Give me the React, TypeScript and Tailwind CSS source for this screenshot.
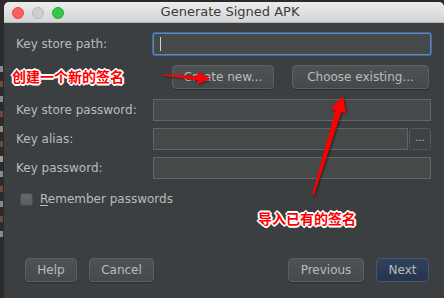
const labelFont = { fontFamily: '"DejaVu Sans", sans-serif' };

const Field = ({ label, children }: { label: string; children: React.ReactNode }) => (
  <div className="flex items-center h-[22px]">
    <div className="w-[137px] text-[12px] text-[#bbbbbb]">{label}</div>
    {children}
  </div>
);

const Btn = ({ children, className = "" }: { children: React.ReactNode; className?: string }) => (
  <button
    className={
      "h-[24px] rounded-[4px] border border-[#5e6060] bg-gradient-to-b from-[#4f5355] to-[#46494b] text-[12px] text-[#bbbbbb] shadow-[0_1px_1px_rgba(0,0,0,0.25)] " +
      className
    }
  >
    {children}
  </button>
);

const Note = ({ text, className }: { text: string; className: string }) => (
  <div
    className={"absolute text-[14px] font-bold leading-none text-[#ff0000] " + className}
    style={{
      fontFamily: '"Noto Sans CJK SC", sans-serif',
      textShadow:
        "1px 0 0 #fff, -1px 0 0 #fff, 0 1px 0 #fff, 0 -1px 0 #fff, 1px 1px 0 #fff, -1px -1px 0 #fff, 1px -1px 0 #fff, -1px 1px 0 #fff, 2px 0 0 #fff, -2px 0 0 #fff, 0 2px 0 #fff, 0 -2px 0 #fff",
    }}
  >
    {text}
  </div>
);

// clipped code fragments of the editor peeking out on the left
const bits = ["#8a8a8a", "#6b4a3a", "#8a8a8a", "#6b4a3a", "#8a8a8a", "#6b4a3a", "#9a9a9a", "#8a8a8a", "#6b4a3a", "#8a8a8a", "#6b4a3a", "#8a8a8a"];

export default function App() {
  return (
    <div className="relative w-[444px] h-[298px] overflow-hidden bg-[#2b2b2b]" style={labelFont}>
      <div className="flex h-full">
        {/* editor behind the dialog */}
        <div className="w-[4px] pt-[66px] flex flex-col gap-[9px]">
          {bits.map((c, i) => (
            <div key={i} className="w-[3px] h-[6px]" style={{ backgroundColor: c }} />
          ))}
        </div>

        {/* dialog window */}
        <div className="flex-1 mt-[2px] flex flex-col rounded-t-[5px] overflow-hidden bg-[#3c3f41]">
          <div className="relative h-[21px] flex items-center justify-center bg-gradient-to-b from-[#ececec] to-[#d5d5d5] border-b border-[#b5b5b5]">
            <div className="absolute left-[8px] top-[5px] flex gap-[8px]">
              <span className="w-[12px] h-[12px] rounded-full bg-[#fc605c] border border-[#de4a45]" />
              <span className="w-[12px] h-[12px] rounded-full bg-[#cfcfcf] border border-[#b8b8b8]" />
              <span className="w-[12px] h-[12px] rounded-full bg-[#34c84a] border border-[#2aa73b]" />
            </div>
            <span className="text-[13px] text-[#3a3a3a] ml-[12px]">Generate Signed APK</span>
          </div>

          <div className="flex-1 flex flex-col pl-[12px] pr-[13px] pt-[10px] pb-[16px]">
            <Field label="Key store path:">
              <div className="flex-1 h-[22px] rounded-[2px] border border-[#5789c5] bg-[#45494a] shadow-[0_0_0_1px_rgba(74,136,199,0.6)] flex items-center pl-[6px]">
                <span className="w-px h-[14px] bg-[#cfcfcf]" />
              </div>
            </Field>

            <div className="flex mt-[10px] pl-[156px]">
              <Btn className="w-[102px]">Create new...</Btn>
              <Btn className="w-[137px] ml-[18px]">Choose existing...</Btn>
            </div>

            <div className="mt-[10px] flex flex-col gap-[7px]">
              <Field label="Key store password:">
                <div className="flex-1 h-[22px] border border-[#646464] bg-[#45494a]" />
              </Field>
              <Field label="Key alias:">
                <div className="flex-1 h-[22px] border border-[#646464] bg-[#45494a]" />
                <div className="ml-[1px] w-[22px] h-[22px] rounded-[3px] border border-[#555858] bg-[#3f4244] flex items-center justify-center text-[10px] text-[#bbbbbb] leading-none pb-[3px]">
                  ...
                </div>
              </Field>
              <Field label="Key password:">
                <div className="flex-1 h-[22px] border border-[#646464] bg-[#45494a]" />
              </Field>
            </div>

            <label className="mt-[11px] flex items-center gap-[7px] pl-[4px] text-[12px] text-[#bbbbbb]">
              <span className="w-[13px] h-[13px] rounded-[3px] border border-[#4a4c4e] bg-gradient-to-b from-[#666a6c] to-[#595c5e]" />
              <span>
                <span className="underline underline-offset-2">R</span>emember passwords
              </span>
            </label>

            <div className="mt-auto flex items-center pl-[9px] pr-[2px]">
              <Btn className="w-[52px]">Help</Btn>
              <Btn className="w-[65px] ml-[12px]">Cancel</Btn>
              <div className="flex-1" />
              <Btn className="w-[76px] text-[#8c8c8c]">Previous</Btn>
              <button className="ml-[12px] w-[53px] h-[24px] rounded-[4px] border border-[#4b5768] bg-gradient-to-b from-[#30425f] to-[#26354d] text-[12px] text-[#bbbbbb]">
                Next
              </button>
            </div>
          </div>
        </div>
      </div>

      {/* annotations */}
      <Note text="创建一个新的签名" className="left-[12px] top-[69px]" />
      <Note text="导入已有的签名" className="left-[258px] top-[211px]" />
      <svg className="absolute inset-0 pointer-events-none" width="444" height="298">
        <g fill="#ff0000" style={{ filter: "drop-shadow(1px 1px 1px rgba(0,0,0,0.5))" }}>
          <polygon points="163,74.5 198.2,76 198.5,71.5 210,79 197.5,84.5 197.8,80 163,75.8" />
          <polygon points="312,195 335.5,110.4 330.7,109 343,96 346.1,113.6 341.3,112.2 314,195.3" />
        </g>
      </svg>
    </div>
  );
}
